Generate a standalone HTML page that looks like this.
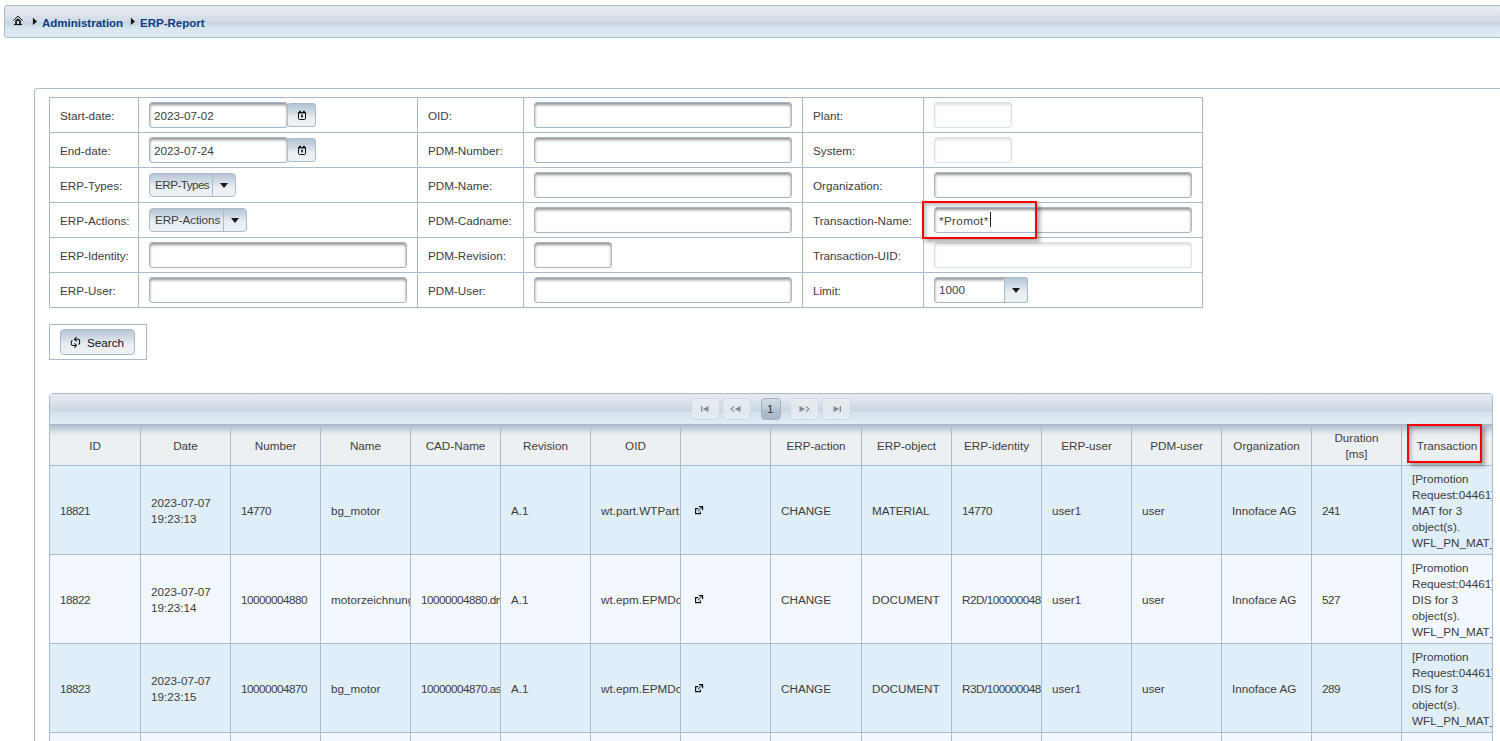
<!DOCTYPE html>
<html><head><meta charset="utf-8"><style>
*{box-sizing:border-box;margin:0;padding:0}
html,body{width:1500px;height:741px;overflow:hidden;background:#fff;font-family:"Liberation Sans",sans-serif;font-size:11.7px;color:#3d3d3d}
div,span,svg{position:absolute}
.t{white-space:nowrap;line-height:14px}
.hl{height:1px;background:#a9bccd}
.vl{width:1px;background:#a9bccd}
#crumb{left:4px;top:5px;width:1510px;height:33px;border:1px solid #a9bccd;border-radius:3px;
 background:linear-gradient(#e5e9f0 0px,#e2e7ee 8.5px,#d9e1e9 9.5px,#d2dce5 15.5px,#c6d4e0 16.5px,#d3dfea 20px,#dce8f2 25px,#e0ebf5 31px)}
.cb{color:#123d82;font-weight:bold;font-size:11.5px}
.inp{height:26px;border:1px solid #a5b8cb;border-radius:3px;background:#fff;box-shadow:inset 0 2px 3px rgba(40,40,40,0.5)}
.inp.dis{box-shadow:inset 0 2px 3px rgba(0,0,0,0.13);border-color:#d9e1e9}
.calbtn{height:24px;width:29px;border:1px solid #a9bccd;border-radius:3px;background:linear-gradient(#b3c3d3,#d6dfe8 45%,#eaeef2 60%,#eef1f4)}
.sel{height:24px;border:1px solid #a9bccd;border-radius:4px;background:linear-gradient(#b6c5d5,#dbe3eb 45%,#eaeef2 60%,#eef1f4)}
.tri{width:0;height:0;border-left:4px solid transparent;border-right:4px solid transparent;border-top:5px solid #1a1a1a}
.pb{height:22px;width:29px;border:1px solid #cfdae4;border-radius:4px;background:linear-gradient(#e6ebf0,#e3e9ef 45%,#e0e8ef 60%,#e6eef5)}
.cell{overflow:hidden;white-space:nowrap}
.hd{text-align:center;line-height:16px}
</style></head><body>
<div id="crumb">
<svg style="left:5px;top:6px" width="16" height="16" viewBox="0 0 16 16"><path d="M3.3 8.7 L8 4.1 L12.7 8.7" fill="none" stroke="#111" stroke-width="1"/><path d="M5.2 8.7 L8 6.2 L10.8 8.7 L10.8 12.3 L5.2 12.3 Z" fill="#111"/><rect x="6.9" y="8.9" width="2.2" height="3.3" fill="#d3dee8"/><rect x="4" y="12" width="8" height="1.1" fill="#111"/></svg>
<svg style="left:27px;top:10px" width="6" height="11" viewBox="0 0 6 11"><path d="M0.9 1.8 L5 5.4 L0.9 9Z" fill="#111"/></svg>
<div class="t cb" style="left:37px;top:10px">Administration</div>
<svg style="left:125px;top:10px" width="6" height="11" viewBox="0 0 6 11"><path d="M0.9 1.8 L5 5.4 L0.9 9Z" fill="#111"/></svg>
<div class="t cb" style="left:135px;top:10px">ERP-Report</div>
</div>
<div style="left:34px;top:88px;width:1500px;height:700px;border-left:1px solid #a9bccd;border-top:1px solid #a9bccd;border-top-left-radius:4px"></div>
<div class="hl" style="left:49px;top:97px;width:1154px"></div>
<div class="hl" style="left:49px;top:132px;width:1154px"></div>
<div class="hl" style="left:49px;top:167px;width:1154px"></div>
<div class="hl" style="left:49px;top:202px;width:1154px"></div>
<div class="hl" style="left:49px;top:237px;width:1154px"></div>
<div class="hl" style="left:49px;top:272px;width:1154px"></div>
<div class="hl" style="left:49px;top:307px;width:1154px"></div>
<div class="vl" style="left:49px;top:97px;height:211px"></div>
<div class="vl" style="left:138px;top:97px;height:211px"></div>
<div class="vl" style="left:417px;top:97px;height:211px"></div>
<div class="vl" style="left:523px;top:97px;height:211px"></div>
<div class="vl" style="left:802px;top:97px;height:211px"></div>
<div class="vl" style="left:923px;top:97px;height:211px"></div>
<div class="vl" style="left:1202px;top:97px;height:211px"></div>
<div class="t" style="left:60px;top:109px">Start-date:</div>
<div class="t" style="left:60px;top:144px">End-date:</div>
<div class="t" style="left:60px;top:179px">ERP-Types:</div>
<div class="t" style="left:60px;top:214px">ERP-Actions:</div>
<div class="t" style="left:60px;top:249px">ERP-Identity:</div>
<div class="t" style="left:60px;top:284px">ERP-User:</div>
<div class="t" style="left:428px;top:109px">OID:</div>
<div class="t" style="left:428px;top:144px">PDM-Number:</div>
<div class="t" style="left:428px;top:179px">PDM-Name:</div>
<div class="t" style="left:428px;top:214px">PDM-Cadname:</div>
<div class="t" style="left:428px;top:249px">PDM-Revision:</div>
<div class="t" style="left:428px;top:284px">PDM-User:</div>
<div class="t" style="left:813px;top:109px">Plant:</div>
<div class="t" style="left:813px;top:144px">System:</div>
<div class="t" style="left:813px;top:179px">Organization:</div>
<div class="t" style="left:813px;top:214px">Transaction-Name:</div>
<div class="t" style="left:813px;top:249px">Transaction-UID:</div>
<div class="t" style="left:813px;top:284px">Limit:</div>
<div class="inp" style="left:149px;top:102px;width:139px"></div>
<div class="t" style="left:154px;top:109px;letter-spacing:0px">2023-07-02</div>
<div class="calbtn" style="left:287px;top:103px"><svg style="left:10px;top:6px" width="8" height="10" viewBox="0 0 8 10"><path d="M0.5 2.5 L0.5 8.8 L1.2 9.5 L6.8 9.5 L7.5 8.8 L7.5 2.5" fill="none" stroke="#111" stroke-width="1"/><rect x="0" y="2" width="8" height="1.4" fill="#111"/><rect x="1.1" y="0.8" width="1.9" height="1.4" fill="#111"/><rect x="5" y="0.8" width="1.9" height="1.4" fill="#111"/><rect x="3.2" y="4.5" width="1.6" height="3" rx="0.6" fill="#111"/></svg></div>
<div class="inp" style="left:149px;top:137px;width:139px"></div>
<div class="t" style="left:154px;top:144px;letter-spacing:0px">2023-07-24</div>
<div class="calbtn" style="left:287px;top:138px"><svg style="left:10px;top:6px" width="8" height="10" viewBox="0 0 8 10"><path d="M0.5 2.5 L0.5 8.8 L1.2 9.5 L6.8 9.5 L7.5 8.8 L7.5 2.5" fill="none" stroke="#111" stroke-width="1"/><rect x="0" y="2" width="8" height="1.4" fill="#111"/><rect x="1.1" y="0.8" width="1.9" height="1.4" fill="#111"/><rect x="5" y="0.8" width="1.9" height="1.4" fill="#111"/><rect x="3.2" y="4.5" width="1.6" height="3" rx="0.6" fill="#111"/></svg></div>
<div class="sel" style="left:149px;top:173px;width:87px"><div class="vl" style="left:62px;top:0;height:22px"></div><div class="tri" style="left:70px;top:9px"></div></div>
<div class="t" style="left:155px;top:178px;letter-spacing:-0.55px">ERP-Types</div>
<div class="sel" style="left:149px;top:208px;width:98px"><div class="vl" style="left:73px;top:0;height:22px"></div><div class="tri" style="left:81px;top:9px"></div></div>
<div class="t" style="left:155px;top:213px;letter-spacing:-0.1px">ERP-Actions</div>
<div class="inp" style="left:149px;top:242px;width:258px"></div>
<div class="inp" style="left:149px;top:277px;width:258px"></div>
<div class="inp" style="left:534px;top:102px;width:258px"></div>
<div class="inp" style="left:534px;top:137px;width:258px"></div>
<div class="inp" style="left:534px;top:172px;width:258px"></div>
<div class="inp" style="left:534px;top:207px;width:258px"></div>
<div class="inp" style="left:534px;top:242px;width:78px"></div>
<div class="inp" style="left:534px;top:277px;width:258px"></div>
<div class="inp dis" style="left:934px;top:102px;width:78px"></div>
<div class="inp dis" style="left:934px;top:137px;width:78px"></div>
<div class="inp" style="left:934px;top:172px;width:258px"></div>
<div class="inp" style="left:934px;top:207px;width:258px"></div>
<div class="t" style="left:939px;top:214px;letter-spacing:0.35px">*Promot*</div>
<div style="left:990px;top:212px;width:1px;height:15px;background:#222"></div>
<div class="inp dis" style="left:934px;top:242px;width:258px"></div>
<div class="inp" style="left:934px;top:277px;width:94px"></div>
<div class="sel" style="left:1004px;top:277px;width:24px;height:26px;border-radius:0 3px 3px 0"><div class="tri" style="left:7px;top:10px"></div></div>
<div class="t" style="left:939px;top:283px">1000</div>
<div style="left:922px;top:201px;width:115px;height:38px;border:2px solid #ff0000;box-shadow:3px 3px 4px rgba(0,0,0,0.33),inset 2px 2px 4px rgba(0,0,0,0.28)"></div>
<div style="left:49px;top:324px;width:98px;height:36px;border:1px solid #a9bccd"></div>
<div class="sel" style="left:60px;top:329px;width:75px;height:26px;border-radius:4px"></div>
<svg style="left:70px;top:336px" width="11" height="13" viewBox="0 0 11 13"><path d="M2.4 4.4 L1.3 5.4 L1.3 8.4 L2.3 9.5 L6.4 9.5" fill="none" stroke="#111" stroke-width="1.05"/><path d="M4.4 7.4 L6.5 9.5 L4.4 11.6" fill="none" stroke="#111" stroke-width="1.05"/><path d="M8.5 8.5 L9.6 7.5 L9.6 4.2 L8.7 3.3 L4.6 3.3" fill="none" stroke="#111" stroke-width="1.05"/><path d="M6.6 1.2 L4.5 3.3 L6.6 5.4" fill="none" stroke="#111" stroke-width="1.05"/></svg>
<div class="t" style="left:87px;top:336px;color:#111">Search</div>
<div style="left:49px;top:393px;width:1444px;height:400px;border:1px solid #a9bccd;border-radius:4px 4px 0 0;overflow:hidden">
<div style="left:0;top:0;width:1500px;height:30px;background:linear-gradient(#e4e8ef 0px,#e1e6ed 7px,#d8e0e8 8px,#d2dce5 14.5px,#c7d5e1 15.5px,#d4e0eb 19px,#dde9f3 25px,#e1ebf5 30px)"></div>
<div style="left:0;top:30px;width:1500px;height:41px;background:linear-gradient(#a6b6c6 0px,#b4c2cf 2px,#c6d0da 5px,#dbe2e8 8px,#e8ecf0 11px,#edf0f3 13px,#edf0f3 41px)"></div>
<div style="left:0;top:71px;width:1500px;height:89px;background:#e0eefa"></div>
<div class="hl" style="left:0;top:71px;width:1500px"></div>
<div style="left:0;top:160px;width:1500px;height:89px;background:#f3f8fe"></div>
<div class="hl" style="left:0;top:160px;width:1500px"></div>
<div style="left:0;top:249px;width:1500px;height:89px;background:#e0eefa"></div>
<div class="hl" style="left:0;top:249px;width:1500px"></div>
<div style="left:0;top:338px;width:1500px;height:89px;background:#f3f8fe"></div>
<div class="hl" style="left:0;top:338px;width:1500px"></div>
<div class="vl" style="left:90px;top:31px;height:400px"></div>
<div class="vl" style="left:180px;top:31px;height:400px"></div>
<div class="vl" style="left:270px;top:31px;height:400px"></div>
<div class="vl" style="left:360px;top:31px;height:400px"></div>
<div class="vl" style="left:450px;top:31px;height:400px"></div>
<div class="vl" style="left:540px;top:31px;height:400px"></div>
<div class="vl" style="left:630px;top:31px;height:400px"></div>
<div class="vl" style="left:720px;top:31px;height:400px"></div>
<div class="vl" style="left:811px;top:31px;height:400px"></div>
<div class="vl" style="left:901px;top:31px;height:400px"></div>
<div class="vl" style="left:991px;top:31px;height:400px"></div>
<div class="vl" style="left:1081px;top:31px;height:400px"></div>
<div class="vl" style="left:1171px;top:31px;height:400px"></div>
<div class="vl" style="left:1261px;top:31px;height:400px"></div>
<div class="vl" style="left:1351px;top:31px;height:400px"></div>
</div>
<div class="pb" style="left:691px;top:398px"></div>
<div class="pb" style="left:722px;top:398px"></div>
<div class="pb" style="left:790px;top:398px"></div>
<div class="pb" style="left:822px;top:398px"></div>
<div style="left:761px;top:398px;width:20px;height:22px;border:1px solid #9fb1c3;border-radius:4px;background:linear-gradient(#d3dce5,#bfccd8 45%,#aebecd 60%,#a9b9c9)"></div>
<div class="t" style="left:767px;top:402px;color:#333">1</div>
<svg style="left:700px;top:405px" width="10" height="8" viewBox="0 0 10 8"><rect x="1" y="1" width="1.3" height="6" fill="#8a8a8a"/><path d="M8.5 1 L2.8 4 L8.5 7Z" fill="#8a8a8a"/></svg>
<svg style="left:730px;top:405px" width="12" height="8" viewBox="0 0 12 8"><path d="M4 1.3 L1 4 L4 6.7" fill="none" stroke="#8a8a8a" stroke-width="1.1"/><path d="M10.5 1 L4.8 4 L10.5 7Z" fill="#8a8a8a"/></svg>
<svg style="left:798px;top:405px" width="12" height="8" viewBox="0 0 12 8"><path d="M8 1.3 L11 4 L8 6.7" fill="none" stroke="#8a8a8a" stroke-width="1.1"/><path d="M1.5 1 L7.2 4 L1.5 7Z" fill="#8a8a8a"/></svg>
<svg style="left:832px;top:405px" width="10" height="8" viewBox="0 0 10 8"><rect x="7.7" y="1" width="1.3" height="6" fill="#8a8a8a"/><path d="M1.5 1 L7.2 4 L1.5 7Z" fill="#8a8a8a"/></svg>
<div class="t hd" style="left:50px;top:438px;width:90px">ID</div>
<div class="t hd" style="left:141px;top:438px;width:89px">Date</div>
<div class="t hd" style="left:231px;top:438px;width:89px">Number</div>
<div class="t hd" style="left:321px;top:438px;width:89px">Name</div>
<div class="t hd" style="left:411px;top:438px;width:89px">CAD-Name</div>
<div class="t hd" style="left:501px;top:438px;width:89px">Revision</div>
<div class="t hd" style="left:591px;top:438px;width:89px">OID</div>
<div class="t hd" style="left:681px;top:438px;width:89px"></div>
<div class="t hd" style="left:771px;top:438px;width:90px">ERP-action</div>
<div class="t hd" style="left:862px;top:438px;width:89px">ERP-object</div>
<div class="t hd" style="left:952px;top:438px;width:89px">ERP-identity</div>
<div class="t hd" style="left:1042px;top:438px;width:89px">ERP-user</div>
<div class="t hd" style="left:1132px;top:438px;width:89px">PDM-user</div>
<div class="t hd" style="left:1222px;top:438px;width:89px">Organization</div>
<div class="t hd" style="left:1312px;top:430px;width:89px">Duration<br>[ms]</div>
<div class="t hd" style="left:1402px;top:438px;width:90px">Transaction</div>
<div style="left:1407px;top:424px;width:75px;height:39px;border:2px solid #ff0000;box-shadow:3px 3px 4px rgba(0,0,0,0.33),inset 2px 2px 4px rgba(0,0,0,0.28)"></div>
<div class="cell t" style="left:50px;top:503px;width:90px;height:16px;line-height:16px;padding-left:10px;letter-spacing:-0.5px">18821</div>
<div class="cell t" style="left:141px;top:495px;width:89px;height:32px;line-height:16px;padding-left:10px;letter-spacing:0">2023-07-07<br>19:23:13</div>
<div class="cell t" style="left:231px;top:503px;width:89px;height:16px;line-height:16px;padding-left:10px;letter-spacing:-0.5px">14770</div>
<div class="cell t" style="left:321px;top:503px;width:89px;height:16px;line-height:16px;padding-left:10px;letter-spacing:0">bg_motor</div>
<div class="cell t" style="left:411px;top:503px;width:89px;height:16px;line-height:16px;padding-left:10px;letter-spacing:0"></div>
<div class="cell t" style="left:501px;top:503px;width:89px;height:16px;line-height:16px;padding-left:10px;letter-spacing:0">A.1</div>
<div class="cell t" style="left:591px;top:503px;width:89px;height:16px;line-height:16px;padding-left:10px;letter-spacing:0">wt.part.WTPart:12345</div>
<div class="cell" style="left:681px;top:505px;width:89px;height:12px"><svg style="left:14px;top:1px" width="9" height="9" viewBox="0 0 9 9"><path d="M3.4 2.6 L0.6 2.6 L0.6 7.6 L5.4 7.6 L5.4 5.6" fill="none" stroke="#111" stroke-width="1.15"/><path d="M3.9 0.6 L7.6 0.6 L7.6 4.2" fill="none" stroke="#111" stroke-width="1.15"/><path d="M3.2 5.1 L7.2 1.1" fill="none" stroke="#111" stroke-width="1.1" stroke-dasharray="1 0.55"/><path d="M5.6 0.6 L7.6 0.6 L7.6 2.6Z" fill="#111"/></svg></div>
<div class="cell t" style="left:771px;top:503px;width:90px;height:16px;line-height:16px;padding-left:10px;letter-spacing:0">CHANGE</div>
<div class="cell t" style="left:862px;top:503px;width:89px;height:16px;line-height:16px;padding-left:10px;letter-spacing:0">MATERIAL</div>
<div class="cell t" style="left:952px;top:503px;width:89px;height:16px;line-height:16px;padding-left:10px;letter-spacing:-0.5px">14770</div>
<div class="cell t" style="left:1042px;top:503px;width:89px;height:16px;line-height:16px;padding-left:10px;letter-spacing:0">user1</div>
<div class="cell t" style="left:1132px;top:503px;width:89px;height:16px;line-height:16px;padding-left:10px;letter-spacing:0">user</div>
<div class="cell t" style="left:1222px;top:503px;width:89px;height:16px;line-height:16px;padding-left:10px;letter-spacing:0">Innoface AG</div>
<div class="cell t" style="left:1312px;top:503px;width:89px;height:16px;line-height:16px;padding-left:10px;letter-spacing:-0.5px">241</div>
<div class="cell t" style="left:1402px;top:471px;width:90px;height:80px;line-height:16px;padding-left:10px;letter-spacing:0">[Promotion<br>Request:04461]:<br>MAT for 3<br>object(s).<br>WFL_PN_MAT_PR</div>
<div class="cell t" style="left:50px;top:592px;width:90px;height:16px;line-height:16px;padding-left:10px;letter-spacing:-0.5px">18822</div>
<div class="cell t" style="left:141px;top:584px;width:89px;height:32px;line-height:16px;padding-left:10px;letter-spacing:0">2023-07-07<br>19:23:14</div>
<div class="cell t" style="left:231px;top:592px;width:89px;height:16px;line-height:16px;padding-left:10px;letter-spacing:-0.5px">10000004880</div>
<div class="cell t" style="left:321px;top:592px;width:89px;height:16px;line-height:16px;padding-left:10px;letter-spacing:0">motorzeichnung</div>
<div class="cell t" style="left:411px;top:592px;width:89px;height:16px;line-height:16px;padding-left:10px;letter-spacing:-0.5px">10000004880.drw</div>
<div class="cell t" style="left:501px;top:592px;width:89px;height:16px;line-height:16px;padding-left:10px;letter-spacing:0">A.1</div>
<div class="cell t" style="left:591px;top:592px;width:89px;height:16px;line-height:16px;padding-left:10px;letter-spacing:0">wt.epm.EPMDocument</div>
<div class="cell" style="left:681px;top:594px;width:89px;height:12px"><svg style="left:14px;top:1px" width="9" height="9" viewBox="0 0 9 9"><path d="M3.4 2.6 L0.6 2.6 L0.6 7.6 L5.4 7.6 L5.4 5.6" fill="none" stroke="#111" stroke-width="1.15"/><path d="M3.9 0.6 L7.6 0.6 L7.6 4.2" fill="none" stroke="#111" stroke-width="1.15"/><path d="M3.2 5.1 L7.2 1.1" fill="none" stroke="#111" stroke-width="1.1" stroke-dasharray="1 0.55"/><path d="M5.6 0.6 L7.6 0.6 L7.6 2.6Z" fill="#111"/></svg></div>
<div class="cell t" style="left:771px;top:592px;width:90px;height:16px;line-height:16px;padding-left:10px;letter-spacing:0">CHANGE</div>
<div class="cell t" style="left:862px;top:592px;width:89px;height:16px;line-height:16px;padding-left:10px;letter-spacing:0">DOCUMENT</div>
<div class="cell t" style="left:952px;top:592px;width:89px;height:16px;line-height:16px;padding-left:10px;letter-spacing:-0.5px">R2D/10000004880</div>
<div class="cell t" style="left:1042px;top:592px;width:89px;height:16px;line-height:16px;padding-left:10px;letter-spacing:0">user1</div>
<div class="cell t" style="left:1132px;top:592px;width:89px;height:16px;line-height:16px;padding-left:10px;letter-spacing:0">user</div>
<div class="cell t" style="left:1222px;top:592px;width:89px;height:16px;line-height:16px;padding-left:10px;letter-spacing:0">Innoface AG</div>
<div class="cell t" style="left:1312px;top:592px;width:89px;height:16px;line-height:16px;padding-left:10px;letter-spacing:-0.5px">527</div>
<div class="cell t" style="left:1402px;top:560px;width:90px;height:80px;line-height:16px;padding-left:10px;letter-spacing:0">[Promotion<br>Request:04461]:<br>DIS for 3<br>object(s).<br>WFL_PN_MAT_PR</div>
<div class="cell t" style="left:50px;top:681px;width:90px;height:16px;line-height:16px;padding-left:10px;letter-spacing:-0.5px">18823</div>
<div class="cell t" style="left:141px;top:673px;width:89px;height:32px;line-height:16px;padding-left:10px;letter-spacing:0">2023-07-07<br>19:23:15</div>
<div class="cell t" style="left:231px;top:681px;width:89px;height:16px;line-height:16px;padding-left:10px;letter-spacing:-0.5px">10000004870</div>
<div class="cell t" style="left:321px;top:681px;width:89px;height:16px;line-height:16px;padding-left:10px;letter-spacing:0">bg_motor</div>
<div class="cell t" style="left:411px;top:681px;width:89px;height:16px;line-height:16px;padding-left:10px;letter-spacing:-0.5px">10000004870.asm</div>
<div class="cell t" style="left:501px;top:681px;width:89px;height:16px;line-height:16px;padding-left:10px;letter-spacing:0">A.1</div>
<div class="cell t" style="left:591px;top:681px;width:89px;height:16px;line-height:16px;padding-left:10px;letter-spacing:0">wt.epm.EPMDocument</div>
<div class="cell" style="left:681px;top:683px;width:89px;height:12px"><svg style="left:14px;top:1px" width="9" height="9" viewBox="0 0 9 9"><path d="M3.4 2.6 L0.6 2.6 L0.6 7.6 L5.4 7.6 L5.4 5.6" fill="none" stroke="#111" stroke-width="1.15"/><path d="M3.9 0.6 L7.6 0.6 L7.6 4.2" fill="none" stroke="#111" stroke-width="1.15"/><path d="M3.2 5.1 L7.2 1.1" fill="none" stroke="#111" stroke-width="1.1" stroke-dasharray="1 0.55"/><path d="M5.6 0.6 L7.6 0.6 L7.6 2.6Z" fill="#111"/></svg></div>
<div class="cell t" style="left:771px;top:681px;width:90px;height:16px;line-height:16px;padding-left:10px;letter-spacing:0">CHANGE</div>
<div class="cell t" style="left:862px;top:681px;width:89px;height:16px;line-height:16px;padding-left:10px;letter-spacing:0">DOCUMENT</div>
<div class="cell t" style="left:952px;top:681px;width:89px;height:16px;line-height:16px;padding-left:10px;letter-spacing:-0.5px">R3D/10000004870</div>
<div class="cell t" style="left:1042px;top:681px;width:89px;height:16px;line-height:16px;padding-left:10px;letter-spacing:0">user1</div>
<div class="cell t" style="left:1132px;top:681px;width:89px;height:16px;line-height:16px;padding-left:10px;letter-spacing:0">user</div>
<div class="cell t" style="left:1222px;top:681px;width:89px;height:16px;line-height:16px;padding-left:10px;letter-spacing:0">Innoface AG</div>
<div class="cell t" style="left:1312px;top:681px;width:89px;height:16px;line-height:16px;padding-left:10px;letter-spacing:-0.5px">289</div>
<div class="cell t" style="left:1402px;top:649px;width:90px;height:80px;line-height:16px;padding-left:10px;letter-spacing:0">[Promotion<br>Request:04461]:<br>DIS for 3<br>object(s).<br>WFL_PN_MAT_PR</div>
</body></html>
